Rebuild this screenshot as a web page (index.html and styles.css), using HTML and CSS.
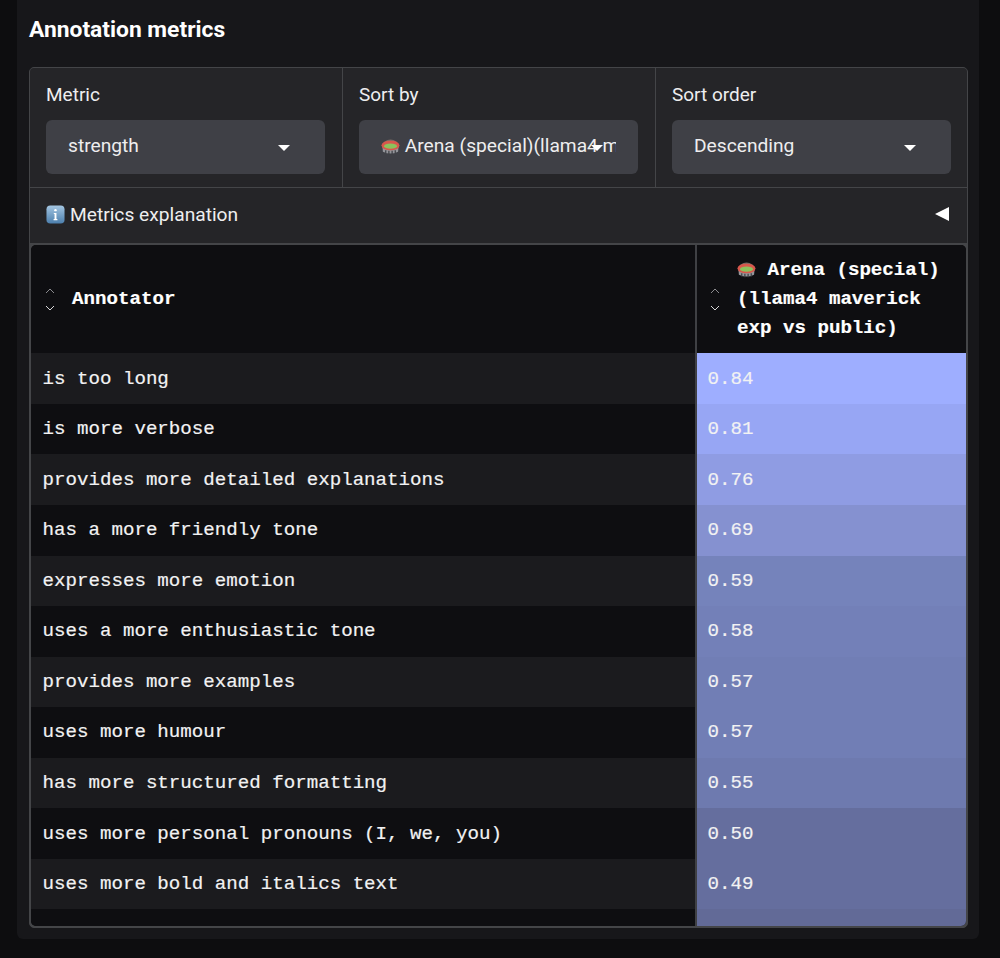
FILE: index.html
```html
<!DOCTYPE html>
<html lang="en">
<head>
    <meta charset="UTF-8">
    <title>Annotation metrics</title>
    <link rel="stylesheet" href="styles.css">
</head>
<body>
    <svg class="defs" width="0" height="0">
        <symbol id="stadium" viewBox="0 0 20 18">
            <path d="M1.5 9 L2 15 Q10 19 18 15 L18.5 9 Z" fill="#93959a"/>
            <path d="M5 13.5v3.4M8.3 14v3.8M11.7 14v3.8M15 13.5v3.4" stroke="#3f4045" stroke-width="1.3"/>
            <path d="M3.5 4.5 Q10 0 16.5 4.5 L16.5 6.5 L3.5 6.5Z" fill="#7a6a64"/>
            <path d="M0.5 8.5 Q1 3.5 10 3.5 Q19 3.5 19.5 8.5 Q18.5 13.5 10 13.5 Q1.5 13.5 0.5 8.5Z" fill="#d8574c"/>
            <ellipse cx="10" cy="9.2" rx="6.8" ry="2.8" fill="#8cc25c"/>
        </symbol>
        <symbol id="sort" viewBox="0 0 12 30">
            <path d="M2 9 L6 5 L10 9" fill="none" stroke="#8a8a8e" stroke-width="1"/>
            <path d="M2 22 L6 26 L10 22" fill="none" stroke="#d8d8da" stroke-width="1"/>
        </symbol>
    </svg>

    <div class="panel">
        <h2 class="panel-title">Annotation metrics</h2>

        <div class="box">
            <div class="controls">
                <div class="control">
                    <label class="control-label">Metric</label>
                    <div class="select">
                        <span class="select-text">strength</span>
                        <span class="caret"></span>
                    </div>
                </div>
                <div class="control">
                    <label class="control-label">Sort by</label>
                    <div class="select">
                        <span class="select-text"><svg class="emoji"><use href="#stadium"/></svg> Arena (special)(llama4 maverick exp vs public)</span>
                        <span class="caret"></span>
                    </div>
                </div>
                <div class="control">
                    <label class="control-label">Sort order</label>
                    <div class="select">
                        <span class="select-text">Descending</span>
                        <span class="caret"></span>
                    </div>
                </div>
            </div>

            <div class="accordion">
                <span class="accordion-label">
                    <svg class="info-icon" viewBox="0 0 20 20">
                        <defs>
                            <linearGradient id="info-bg" x1="0" y1="0" x2="0" y2="1">
                                <stop offset="0" stop-color="#a4c6e2"/>
                                <stop offset="1" stop-color="#4c7fad"/>
                            </linearGradient>
                        </defs>
                        <rect x="0.5" y="0.5" width="19" height="19" rx="4" fill="url(#info-bg)"/>
                        <circle cx="10" cy="5.4" r="1.3" fill="#fff"/>
                        <path d="M8.2 8.4h2.8v6.4h1v1.2h-4v-1.2h1v-5.2h-0.8z" fill="#fff"/>
                    </svg>
                    Metrics explanation
                </span>
                <span class="accordion-arrow"></span>
            </div>

            <div class="table-wrap">
                <table class="metrics">
                    <thead>
                        <tr>
                            <th class="col-name">
                                <div class="th-inner">
                                    <svg class="sort-icon"><use href="#sort"/></svg>
                                    <span>Annotator</span>
                                </div>
                            </th>
                            <th class="col-value">
                                <div class="th-inner">
                                    <svg class="sort-icon"><use href="#sort"/></svg>
                                    <span><svg class="emoji"><use href="#stadium"/></svg> Arena (special) (llama4 maverick exp vs public)</span>
                                </div>
                            </th>
                        </tr>
                    </thead>
                    <tbody>
                        <tr><td>is too long</td><td class="val" style="background: #9eaeff">0.84</td></tr>
                        <tr><td>is more verbose</td><td class="val" style="background: #97a6f4">0.81</td></tr>
                        <tr><td>provides more detailed explanations</td><td class="val" style="background: #8f9ce3">0.76</td></tr>
                        <tr><td>has a more friendly tone</td><td class="val" style="background: #8591d0">0.69</td></tr>
                        <tr><td>expresses more emotion</td><td class="val" style="background: #7583bb">0.59</td></tr>
                        <tr><td>uses a more enthusiastic tone</td><td class="val" style="background: #7380b8">0.58</td></tr>
                        <tr><td>provides more examples</td><td class="val" style="background: #717eb5">0.57</td></tr>
                        <tr><td>uses more humour</td><td class="val" style="background: #717eb5">0.57</td></tr>
                        <tr><td>has more structured formatting</td><td class="val" style="background: #6e7aaf">0.55</td></tr>
                        <tr><td>uses more personal pronouns (I, we, you)</td><td class="val" style="background: #656e9e">0.50</td></tr>
                        <tr><td>uses more bold and italics text</td><td class="val" style="background: #656e9e">0.49</td></tr>
                        <tr><td>&nbsp;</td><td class="val" style="background: #626a97">&nbsp;</td></tr>
                    </tbody>
                </table>
            </div>
        </div>
    </div>
</body>
</html>
```

FILE: styles.css
```css
body {
    margin: 0;
    padding: 0 21px 19px 17px;
    height: 958px;
    box-sizing: border-box;
    overflow: hidden;
    background-color: #0d0d0f;
    color: #f4f4f5;
    font-family: Roboto, "Open Sans", sans-serif;
}

.defs {
    position: absolute;
}

.panel {
    height: 100%;
    box-sizing: border-box;
    padding: 15px 11px 11px 12px;
    background-color: #17171a;
    border-radius: 0 0 6px 6px;
    display: flex;
    flex-direction: column;
}

.panel-title {
    margin: 0 0 23px;
    font-size: 22.8px;
    line-height: 29px;
    font-weight: 700;
    color: #fff;
}

.box {
    flex: 1;
    min-height: 0;
    display: flex;
    flex-direction: column;
    background-color: #444548;
    border: 1px solid #444548;
    border-radius: 5px;
    overflow: hidden;
}

.controls {
    display: grid;
    grid-template-columns: 312px 312px minmax(0, 1fr);
    gap: 1px;
    margin-bottom: 1px;
}

.control {
    background-color: #252528;
    padding: 15px 0 14px 16px;
    height: 119px;
    box-sizing: border-box;
}

.control-label {
    display: block;
    font-size: 19px;
    line-height: 24px;
    margin-bottom: 13px;
    color: #eeeeef;
}

.select {
    position: relative;
    width: 279px;
    height: 54px;
    box-sizing: border-box;
    padding: 0 22px;
    display: flex;
    align-items: center;
    background-color: #3f4046;
    border-radius: 6px;
    font-size: 19.2px;
    color: #eeeeef;
    overflow: hidden;
}

.select-text {
    white-space: nowrap;
    overflow: hidden;
    flex: 1;
    margin-top: -3px;
}

.caret {
    position: absolute;
    right: 35px;
    top: 25px;
    width: 0;
    height: 0;
    border-left: 6px solid transparent;
    border-right: 6px solid transparent;
    border-top: 6px solid #fff;
}

.emoji {
    width: 19px;
    height: 18px;
    vertical-align: -3px;
}

.accordion {
    height: 55px;
    box-sizing: border-box;
    padding: 0 18px 3px 16px;
    background-color: #252528;
    display: flex;
    align-items: center;
    justify-content: space-between;
    margin-bottom: 2px;
    font-size: 19.2px;
    color: #eeeeef;
}

.accordion-label {
    display: flex;
    align-items: center;
    gap: 5px;
}

.info-icon {
    width: 19px;
    height: 19px;
}

.accordion-arrow {
    width: 0;
    height: 0;
    border-top: 7px solid transparent;
    border-bottom: 7px solid transparent;
    border-right: 14px solid #fff;
}

.table-wrap {
    flex: 1;
    min-height: 0;
    margin: 0 1px 1px;
    overflow: hidden;
    border-radius: 5px;
    background-color: #0e0e11;
}

.metrics {
    width: 100%;
    border-collapse: collapse;
    table-layout: fixed;
    font-family: "Liberation Mono", monospace;
    font-size: 19.15px;
    -webkit-text-stroke: 0.2px;
}

.metrics th {
    height: 108.4px;
    padding: 0 11px;
    text-align: left;
    font-weight: 700;
    line-height: 28.8px;
    background-color: #0e0e11;
    color: #fff;
}

.col-value {
    width: 270px;
    box-sizing: border-box;
    border-left: 2px solid #3f4044;
}

.th-inner {
    display: flex;
    align-items: center;
    gap: 16px;
}

.sort-icon {
    width: 12px;
    height: 30px;
    flex-shrink: 0;
}

.col-name .th-inner {
    padding-left: 2px;
}

.col-value .th-inner {
    padding-left: 1px;
}

.metrics td {
    height: 50.55px;
    padding: 0 11.5px;
    color: #f2f2f3;
    white-space: nowrap;
    box-sizing: border-box;
}

.metrics tbody tr:nth-child(odd) td {
    background-color: #1b1b1e;
}

.metrics tbody tr:nth-child(even) td {
    background-color: #0e0e11;
}

.metrics tbody td.val {
    border-left: 2px solid #3f4044;
    padding-left: 10.5px;
}
```
